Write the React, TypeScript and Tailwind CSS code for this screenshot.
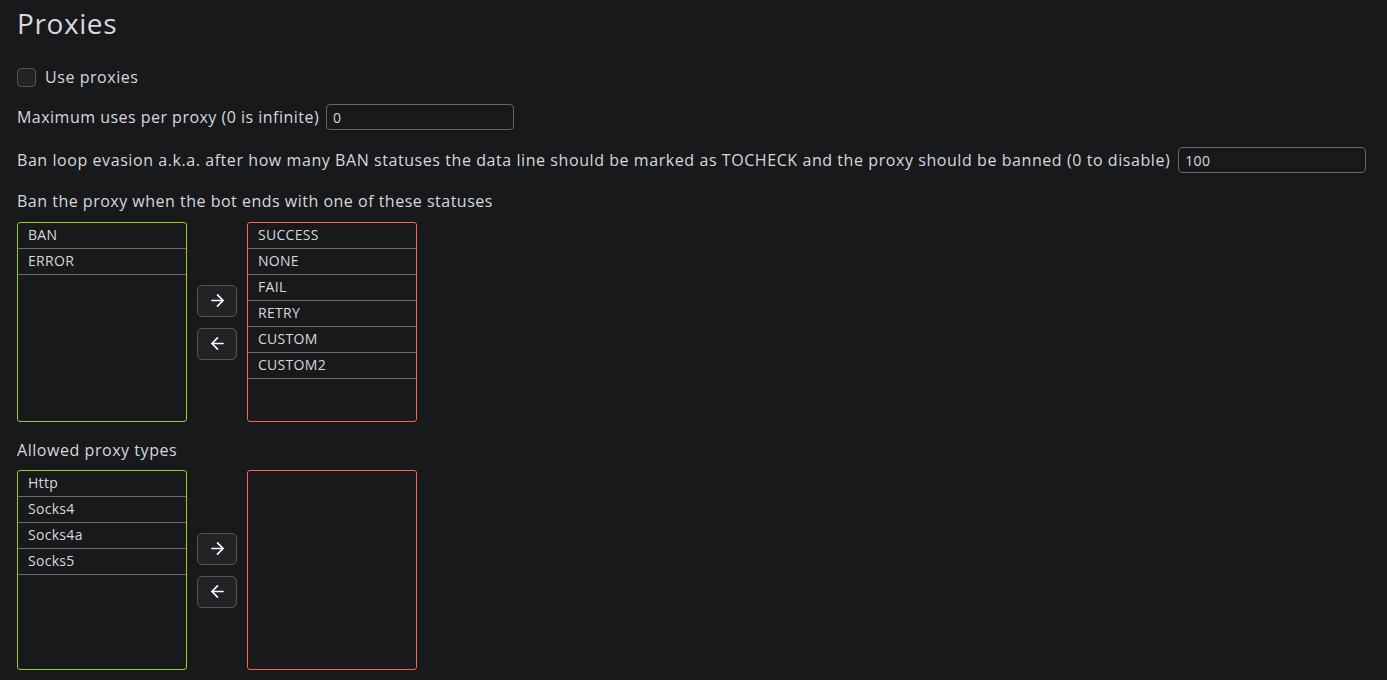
import { ArrowRight, ArrowLeft } from "lucide-react";

const BAN_IN = ["BAN", "ERROR"];
const BAN_OUT = ["SUCCESS", "NONE", "FAIL", "RETRY", "CUSTOM", "CUSTOM2"];
const TYPES_IN = ["Http", "Socks4", "Socks4a", "Socks5"];
const TYPES_OUT: string[] = [];

function ListBox({ items, tone }: { items: string[]; tone: "green" | "red" }) {
  return (
    <div
      className={
        "w-[170px] h-[200px] rounded-[3px] border overflow-hidden " +
        (tone === "green" ? "border-[#9acd32]" : "border-[#ff6347]")
      }
    >
      {items.map((it) => (
        <div
          key={it}
          className="h-[26px] border-b border-[#6a6a6a] pl-[10px] text-[14px] tracking-[0.3px] leading-[24px] text-[#d6d8dc]"
        >
          {it}
        </div>
      ))}
    </div>
  );
}

function Mover({ left, right }: { left: string[]; right: string[] }) {
  return (
    <div className="flex items-center">
      <ListBox items={left} tone="green" />
      <div className="mx-[10px] flex flex-col gap-[11px]">
        <button className="w-[40px] h-[32px] rounded-[5px] border border-[#555] bg-[#222326] flex items-center justify-center text-white">
          <ArrowRight size={19} strokeWidth={2.1} />
        </button>
        <button className="w-[40px] h-[32px] rounded-[5px] border border-[#555] bg-[#222326] flex items-center justify-center text-white">
          <ArrowLeft size={19} strokeWidth={2.1} />
        </button>
      </div>
      <ListBox items={right} tone="red" />
    </div>
  );
}

export default function App() {
  return (
    <div
      className="min-h-screen w-full bg-[#18191b] text-[#d6d8dc] pl-[17px] text-[16px] tracking-[0.55px]"
      style={{ fontFamily: '"Open Sans", "Liberation Sans", sans-serif' }}
    >
      <h1 className="h-[46px] text-[28px] leading-[46px] font-medium tracking-[0.6px] text-[#d6d8dc]">Proxies</h1>

      <label className="mt-[18px] h-[26px] flex items-center gap-[9px]">
        <span className="w-[19px] h-[19px] rounded-[4px] border border-[#555] bg-[#222326]" />
        Use proxies
      </label>

      <div className="mt-[14px] h-[26px] flex items-center gap-[7px]">
        <span className="tracking-[0.48px]">Maximum uses per proxy (0 is infinite)</span>
        <input
          defaultValue="0"
          className="w-[188px] h-[26px] rounded-[4px] border border-[#666] bg-[#18191b] px-[6px] text-[14px] tracking-[0.3px] text-[#d6d8dc] outline-none"
        />
      </div>

      <div className="mt-[17px] h-[26px] flex items-center gap-[8px]">
        <span className="whitespace-nowrap tracking-[0.57px]">
          Ban loop evasion a.k.a. after how many BAN statuses the data line should be marked as TOCHECK and the
          proxy should be banned (0 to disable)
        </span>
        <input
          defaultValue="100"
          className="w-[188px] h-[26px] shrink-0 rounded-[4px] border border-[#666] bg-[#18191b] px-[6px] text-[14px] tracking-[0.3px] text-[#d6d8dc] outline-none"
        />
      </div>

      <div className="mt-[17px] h-[22px] leading-[22px] tracking-[0.5px]">
        Ban the proxy when the bot ends with one of these statuses
      </div>
      <div className="mt-[10px]">
        <Mover left={BAN_IN} right={BAN_OUT} />
      </div>

      <div className="mt-[17px] h-[22px] leading-[22px]">Allowed proxy types</div>
      <div className="mt-[9px]">
        <Mover left={TYPES_IN} right={TYPES_OUT} />
      </div>
    </div>
  );
}
